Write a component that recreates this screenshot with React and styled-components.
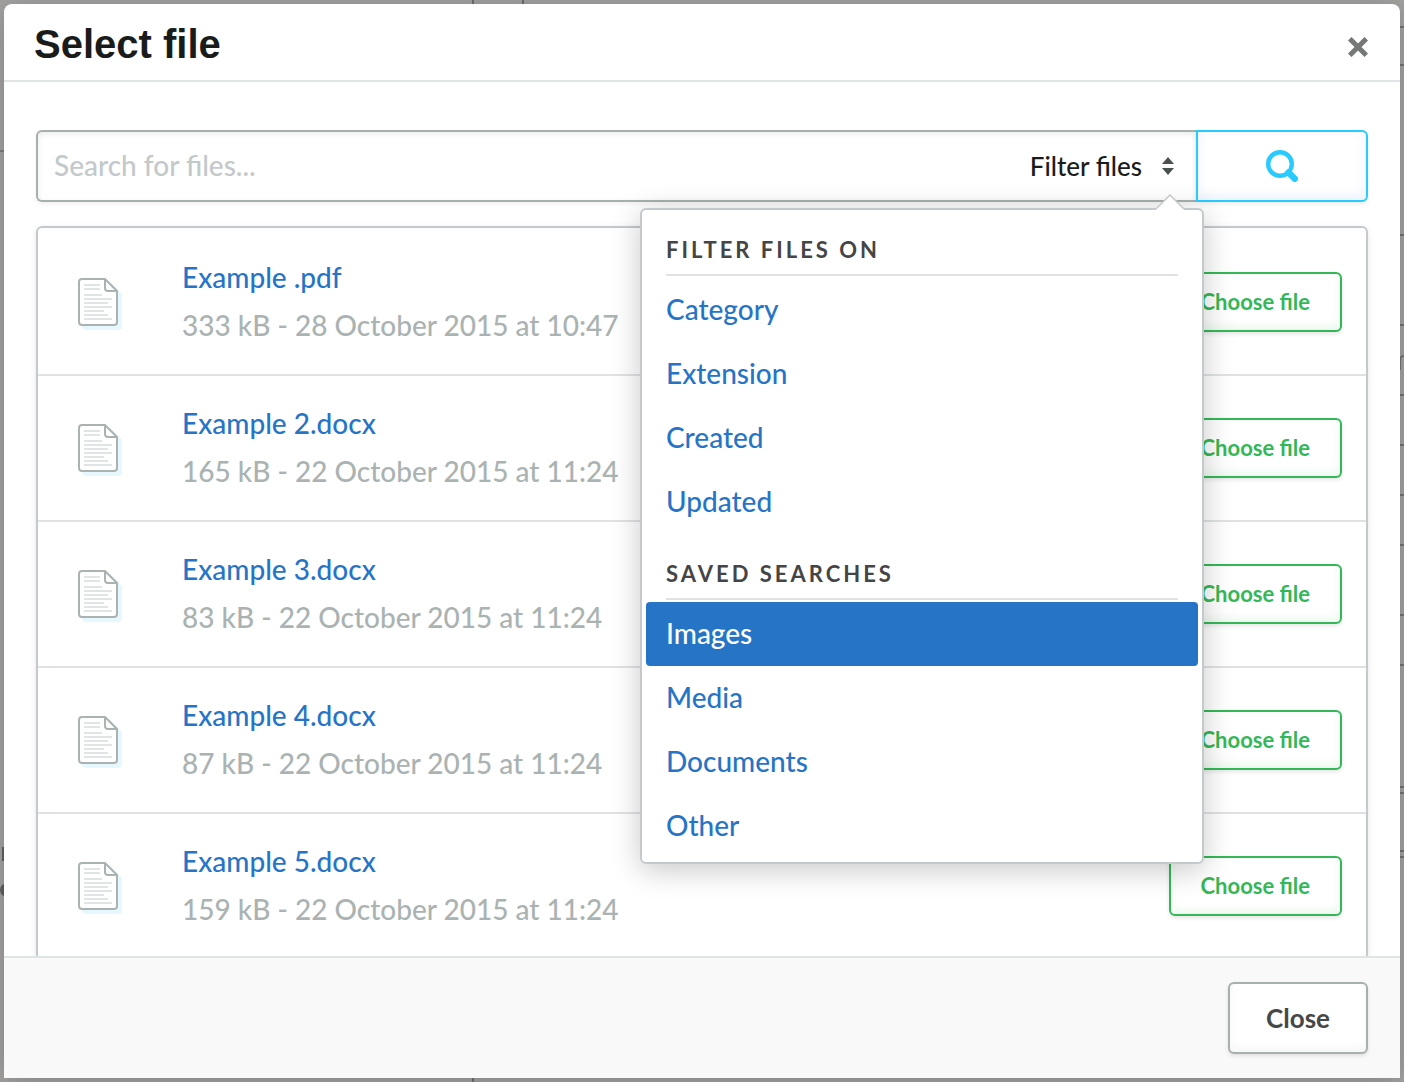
import { useState } from "react";
import styled, { createGlobalStyle, css } from "styled-components";

const files = [
  { name: "Example .pdf", info: "333 kB - 28 October 2015 at 10:47" },
  { name: "Example 2.docx", info: "165 kB - 22 October 2015 at 11:24" },
  { name: "Example 3.docx", info: "83 kB - 22 October 2015 at 11:24" },
  { name: "Example 4.docx", info: "87 kB - 22 October 2015 at 11:24" },
  { name: "Example 5.docx", info: "159 kB - 22 October 2015 at 11:24" },
];

const filterGroups = [
  { title: "Filter files on", items: ["Category", "Extension", "Created", "Updated"] },
  { title: "Saved searches", items: ["Images", "Media", "Documents", "Other"] },
];

// bits of the dimmed page that stick out around the modal
const pageLines = [26, 64, 234, 324, 394, 444, 494, 544, 614, 664, 786, 792, 850, 856];

function DimmedPage() {
  return (
    <>
      <PageEdge width="524" height="100%" aria-hidden="true">
        <path d="M473 0V4000M523 0V4" stroke="#6c706f" strokeWidth="2" />
        <path d="M0 151H4" stroke="#7b7d7c" strokeWidth="2" />
        <path d="M2 847H4V861H2Z" fill="#5d6261" />
        <circle cx="7" cy="890" r="7" fill="#5d6261" />
      </PageEdge>
      <PageEdge $right width="4" height="100%" aria-hidden="true">
        {pageLines.map((y) => (
          <path key={y} d={`M0 ${y + 1}H4`} stroke="#727574" strokeWidth="2" />
        ))}
        <path d="M0 370V360Q0 356 4 356" fill="none" stroke="#727574" strokeWidth="2" />
      </PageEdge>
    </>
  );
}

function FileIcon() {
  return (
    <FileSvg width="44" height="48" viewBox="0 0 44 48" fill="none" aria-hidden="true">
      <path d="M8 4H32L44 16V48Q44 52 40 52H8Q4 52 4 48V8Q4 4 8 4Z" fill="#e6f8fe" />
      <path
        d="M4 1H27L39 13V44Q39 47 36 47H4Q1 47 1 44V4Q1 1 4 1Z"
        fill="#fff"
        stroke="#aab3b2"
        strokeWidth="2"
      />
      <path d="M27 1V10Q27 13 30 13H39" stroke="#aab3b2" strokeWidth="2" />
      <path
        d="M6 7H22M6 11H22M6 17H24M6 21H34M6 25H30M6 29H34M6 33H26M6 37H30M6 41H34"
        stroke="#dfe5e4"
        strokeWidth="2"
      />
    </FileSvg>
  );
}

export default function App() {
  const [search, setSearch] = useState("");
  const [menuOpen, setMenuOpen] = useState(true);
  const [activeFilter, setActiveFilter] = useState("Images");

  return (
    <Backdrop>
      <GlobalStyle />
      <DimmedPage />
      <Modal role="dialog" aria-labelledby="modal-title">
        <Header>
          <Title id="modal-title">Select file</Title>
          <Dismiss type="button" aria-label="Dismiss">
            <svg width="20" height="20" viewBox="0 0 20 20" aria-hidden="true">
              <path
                d="M3.5 3.5L16.5 16.5M16.5 3.5L3.5 16.5"
                stroke="#757876"
                strokeWidth="5"
                strokeLinecap="square"
              />
            </svg>
          </Dismiss>
        </Header>

        <Body>
          <SearchBar onSubmit={(e) => e.preventDefault()}>
            <SearchField>
              <SearchInput
                type="text"
                aria-label="Search for files"
                placeholder="Search for files..."
                value={search}
                onChange={(e) => setSearch(e.target.value)}
              />
              <Filter>
                <FilterButton
                  type="button"
                  aria-haspopup="menu"
                  aria-expanded={menuOpen}
                  onClick={() => setMenuOpen(!menuOpen)}
                >
                  Filter files
                  <svg width="12" height="18" viewBox="0 0 12 18" aria-hidden="true">
                    <path d="M6 0L12 7H0ZM0 11H12L6 18Z" fill="#4b5150" />
                  </svg>
                </FilterButton>
                {menuOpen ? (
                  <Menu>
                    <MenuArrow width="28" height="16" viewBox="0 0 28 16" aria-hidden="true">
                      <path d="M0 16V15L14 1L28 15V16Z" fill="#fff" />
                      <path d="M0 15L14 1L28 15" fill="none" stroke="#c3c9cc" strokeWidth="1.5" />
                    </MenuArrow>
                    {filterGroups.map((group) => (
                      <MenuGroup key={group.title}>
                        <MenuTitle>{group.title}</MenuTitle>
                        {group.items.map((item) => (
                          <MenuItem
                            type="button"
                            key={item}
                            $active={item === activeFilter}
                            onClick={() => setActiveFilter(item)}
                          >
                            {item}
                          </MenuItem>
                        ))}
                      </MenuGroup>
                    ))}
                  </Menu>
                ) : null}
              </Filter>
            </SearchField>
            <SearchButton type="submit" aria-label="Search">
              <svg width="32" height="32" viewBox="0 0 32 32" fill="none" aria-hidden="true">
                <circle cx="14" cy="14" r="11.8" stroke="#29cbff" strokeWidth="4.4" />
                <path d="M22.5 22.5L28.8 28.8" stroke="#29cbff" strokeWidth="6.4" strokeLinecap="round" />
              </svg>
            </SearchButton>
          </SearchBar>

          <FileList>
            {files.map((file) => (
              <FileRow key={file.name}>
                <FileIcon />
                <FileText>
                  <FileName href="#">{file.name}</FileName>
                  <FileInfo>{file.info}</FileInfo>
                </FileText>
                <ChooseButton type="button">Choose file</ChooseButton>
              </FileRow>
            ))}
          </FileList>
        </Body>

        <Footer>
          <CloseButton type="button">Close</CloseButton>
        </Footer>
      </Modal>
    </Backdrop>
  );
}

const GlobalStyle = createGlobalStyle`
  * {
    box-sizing: border-box;
  }

  body {
    margin: 0;
    font-family: Lato, sans-serif;
    font-weight: 500;
    color: #1a1c1b;
  }

  button,
  input {
    font: inherit;
    color: inherit;
    cursor: pointer;
  }
`;

const Backdrop = styled.div`
  position: relative;
  height: 100vh;
  padding: 4px;
  background: #a3a2a1;
  overflow: hidden;
`;

const PageEdge = styled.svg`
  position: absolute;
  top: 0;
  ${({ $right }) => ($right ? "right: 0;" : "left: 0;")}
`;

const Modal = styled.section`
  position: relative;
  height: 100%;
  display: flex;
  flex-direction: column;
  background: #fff;
  border-radius: 8px 8px 0 0;
  box-shadow: 0 4px 30px rgba(0, 0, 0, 0.2);
  overflow: hidden;
`;

const Header = styled.header`
  display: flex;
  align-items: center;
  justify-content: space-between;
  padding: 16px 30px 12px;
  border-bottom: 2px solid #dfe5e4;
`;

const Title = styled.h1`
  margin: 0;
  font-family: "Helvetica Neue", "Liberation Sans", Arial, sans-serif;
  font-size: 40px;
  line-height: 48px;
  font-weight: 700;
`;

const Dismiss = styled.button`
  display: flex;
  padding: 8px 2px 2px;
  border: none;
  background: none;
`;

const Body = styled.div`
  flex: 1;
  min-height: 0;
  padding: 48px 32px 0;
  overflow-y: auto;
  scrollbar-width: none;
`;

const SearchBar = styled.form`
  display: flex;
  height: 72px;
  margin-bottom: 24px;
`;

const SearchField = styled.div`
  flex: 1;
  display: flex;
  border: 2px solid #a8b0ae;
  border-right: none;
  border-radius: 6px 0 0 6px;
  box-shadow: inset 0 2px 6px rgba(0, 0, 0, 0.08), 0 2px 4px rgba(0, 0, 0, 0.06);
`;

const SearchInput = styled.input`
  flex: 1;
  min-width: 0;
  padding: 0 16px 2px;
  border: none;
  outline: none;
  background: none;
  font-size: 28px;
  cursor: text;

  &::placeholder {
    color: #c3c9cb;
    opacity: 1;
  }
`;

const Filter = styled.div`
  position: relative;
  display: flex;
`;

const FilterButton = styled.button`
  display: flex;
  align-items: center;
  gap: 20px;
  padding: 0 22px;
  border: none;
  background: none;
  font-size: 26px;
`;

const Menu = styled.div`
  position: absolute;
  z-index: 2;
  top: 76px;
  right: -8px;
  width: 564px;
  padding: 20px 4px 4px;
  background: #fff;
  border: 2px solid #c3c9cc;
  border-radius: 6px;
  box-shadow: 0 6px 30px rgba(0, 0, 0, 0.22);
`;

const MenuArrow = styled.svg`
  position: absolute;
  top: -16px;
  right: 18px;
`;

const MenuGroup = styled.div`
  & + & {
    margin-top: 20px;
  }
`;

const MenuTitle = styled.h2`
  margin: 0 20px 2px;
  padding-bottom: 4px;
  border-bottom: 2px solid #dfe3e3;
  font-size: 22px;
  line-height: 40px;
  font-weight: 700;
  letter-spacing: 3px;
  text-transform: uppercase;
  color: #454545;
`;

const MenuItem = styled.button`
  display: block;
  width: 100%;
  height: 64px;
  padding: 0 20px 2px;
  border: none;
  border-radius: 4px;
  background: none;
  font-size: 28px;
  text-align: left;
  color: #2674c6;

  ${({ $active }) =>
    $active &&
    css`
      background: #2674c6;
      color: #fff;
    `}
`;

const outlined = css`
  background: #fff;
  border: 2px solid;
  border-radius: 6px;
`;

const SearchButton = styled.button`
  ${outlined}
  display: flex;
  align-items: center;
  justify-content: center;
  width: 172px;
  border-color: #29cbff;
  border-radius: 0 6px 6px 0;
  box-shadow: inset 0 -4px 12px rgba(50, 110, 220, 0.1), 0 2px 4px rgba(0, 0, 0, 0.08);
`;

const FileList = styled.ul`
  margin: 0;
  padding: 0;
  list-style: none;
  border: 2px solid #c3c9cc;
  border-radius: 6px;
  box-shadow: 0 2px 6px rgba(0, 0, 0, 0.1);
`;

const FileRow = styled.li`
  display: flex;
  align-items: center;
  height: 146px;
  padding: 0 24px 0 40px;
  border-top: 2px solid #dfe3e3;

  &:first-child {
    border-top-color: transparent;
  }
`;

const FileSvg = styled.svg`
  overflow: visible;
`;

const FileText = styled.div`
  flex: 1;
  display: flex;
  flex-direction: column;
  align-items: flex-start;
  margin-left: 60px;
  padding-bottom: 2px;
  font-size: 28px;
  line-height: 48px;
`;

const FileName = styled.a`
  color: #2674c6;
  text-decoration: none;
`;

const FileInfo = styled.span`
  color: #aab3b2;
`;

const ChooseButton = styled.button`
  ${outlined}
  height: 60px;
  padding: 0 30px 2px;
  border-color: #34b857;
  box-shadow: inset 0 -4px 8px rgba(52, 184, 87, 0.1), 0 2px 4px rgba(0, 0, 0, 0.1);
  font-size: 22px;
  font-weight: 700;
  color: #34b857;
`;

const Footer = styled.footer`
  display: flex;
  justify-content: flex-end;
  padding: 24px 32px;
  border-top: 2px solid #dfe5e4;
  background: #f9f9f9;
`;

const CloseButton = styled.button`
  ${outlined}
  height: 72px;
  padding: 0 36px;
  border-color: #a8b0ae;
  box-shadow: inset 0 -4px 8px rgba(0, 0, 0, 0.04), 0 2px 4px rgba(0, 0, 0, 0.1);
  font-size: 26px;
  font-weight: 700;
  color: #454847;
`;
